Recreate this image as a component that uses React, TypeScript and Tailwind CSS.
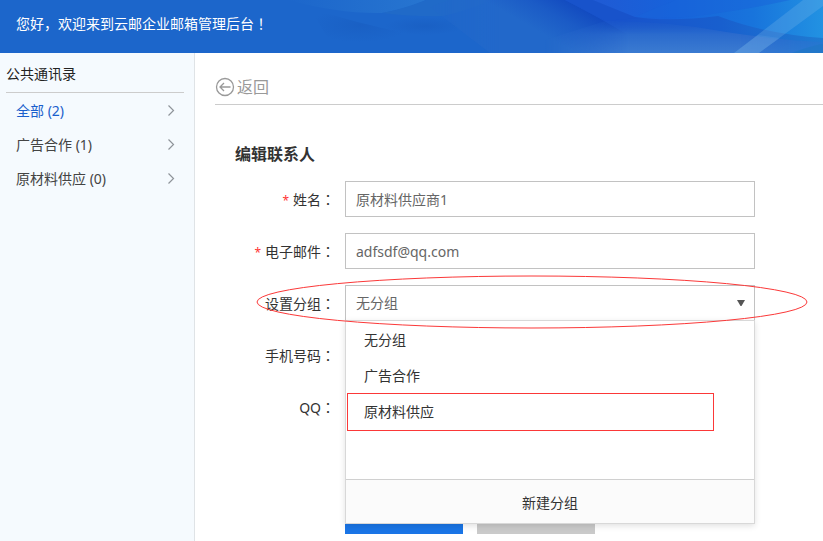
import React, { useState } from 'react';

const groups = [
  { name: '全部', count: 2 },
  { name: '广告合作', count: 1 },
  { name: '原材料供应', count: 0 },
];

const options = ['无分组', '广告合作', '原材料供应'];

const inputClass =
  'block h-9 w-full max-w-[410px] border border-[#c2c2c2] bg-white px-2.5 text-[#666] outline-none';

// Punctuation centred in its full-width cell
const Mark = ({ children }: { children: React.ReactNode }) => (
  <span className="font-['Noto_Sans_CJK_JP',sans-serif]">{children}</span>
);

const HeaderArt = () => (
  <svg
    className="absolute inset-0 h-full w-full"
    viewBox="0 0 823 53"
    preserveAspectRatio="xMaxYMid slice"
    aria-hidden="true"
  >
    <defs>
      <linearGradient id="glow" x1="0" y1="0" x2="1" y2="0">
        <stop offset="0" stopColor="#1c66cb" />
        <stop offset="1" stopColor="#2775d0" />
      </linearGradient>
      <radialGradient id="shade">
        <stop offset="0" stopColor="#185cc0" />
        <stop offset="1" stopColor="#185cc0" stopOpacity="0" />
      </radialGradient>
      <linearGradient id="slope" gradientUnits="userSpaceOnUse" x1="592" y1="10" x2="560" y2="66">
        <stop offset="0" stopColor="#1148bf" />
        <stop offset="0.35" stopColor="#1b5bc6" />
        <stop offset="0.7" stopColor="#2268ca" />
        <stop offset="1" stopColor="#2268ca" />
      </linearGradient>
      <linearGradient id="slopeEdge" gradientUnits="userSpaceOnUse" x1="430" y1="0" x2="500" y2="0">
        <stop offset="0" stopColor="#fff" stopOpacity="0.3" />
        <stop offset="1" stopColor="#fff" />
      </linearGradient>
      <mask id="slopeMask">
        <rect x="420" width="403" height="53" fill="url(#slopeEdge)" />
      </mask>
      <linearGradient id="deep" gradientUnits="userSpaceOnUse" x1="590" y1="0" x2="823" y2="0">
        <stop offset="0" stopColor="#205ad4" />
        <stop offset="0.35" stopColor="#1762da" />
        <stop offset="0.7" stopColor="#1874dc" />
        <stop offset="1" stopColor="#2292e2" />
      </linearGradient>
      <linearGradient id="under" gradientUnits="userSpaceOnUse" x1="620" y1="0" x2="823" y2="0">
        <stop offset="0" stopColor="#1853cb" />
        <stop offset="0.5" stopColor="#185fce" />
        <stop offset="1" stopColor="#1f7bd2" />
      </linearGradient>
      <linearGradient id="mist" gradientUnits="userSpaceOnUse" x1="0" y1="16" x2="0" y2="53">
        <stop offset="0" stopColor="#1a57c9" stopOpacity="0" />
        <stop offset="0.5" stopColor="#2b6bcd" />
        <stop offset="1" stopColor="#3b7bd1" />
      </linearGradient>
      <linearGradient id="mistEdge" gradientUnits="userSpaceOnUse" x1="545" y1="0" x2="823" y2="0">
        <stop offset="0" stopColor="#fff" stopOpacity="0" />
        <stop offset="0.3" stopColor="#fff" />
        <stop offset="0.7" stopColor="#fff" />
        <stop offset="1" stopColor="#fff" stopOpacity="0.3" />
      </linearGradient>
      <mask id="mistMask">
        <rect x="540" width="283" height="53" fill="url(#mistEdge)" />
      </mask>
    </defs>
    <rect width="823" height="53" fill="#1c66cb" />
    <path d="M288 0Q340 14 382 13Q410 8 426 0Z" fill="url(#glow)" />
    <path d="M426 0Q400 10 382 13Q415 17 443 16Q470 10 492 0Z" fill="#206ac8" />
    <path d="M310 8Q355 23 410 34Q380 44 330 42Z" fill="url(#shade)" fillOpacity="0.6" />
    <ellipse cx="425" cy="26" rx="40" ry="9" fill="url(#shade)" fillOpacity="0.6" />
    <path d="M430 7L450 0H823V53H490Z" fill="url(#slope)" mask="url(#slopeMask)" />
    {/* Layered ridges on the right */}
    <path d="M565 0H823V53H655Q620 28 565 0Z" fill="url(#under)" />
    <path d="M565 0H594L640 18L605 21Z" fill="#1853cb" />
    <path d="M593 0Q620 11 635 17Q670 22 718 16Q765 34 823 38V0Z" fill="url(#deep)" />
    <path d="M635 17Q670 20 712 14Q755 8 790 0H676Q655 8 635 17Z" fill="#1764da" fillOpacity="0.5" />
    <path d="M545 53V40L605 21Q665 21 720 31Q775 40 823 42V53Z" fill="url(#mist)" mask="url(#mistMask)" />
    <path d="M734 53L803 0H823V6L759 53Z" fill="#7ab8ea" fillOpacity="0.28" />
    <path d="M734 53L758 35L780 38L759 53Z" fill="#7ab8ea" fillOpacity="0.15" />
    <path d="M792 53Q810 46 823 44V53Z" fill="#1f76c6" fillOpacity="0.7" />
  </svg>
);

const ChevronIcon = () => (
  <svg className="h-3 w-2" viewBox="0 0 8 12" fill="none" stroke="#8f949a" strokeWidth="1.2" aria-hidden="true">
    <path d="M1.5 0.5L6.5 5.5L1.5 10.5" />
  </svg>
);

const BackIcon = () => (
  <svg className="h-5 w-5" viewBox="0 0 20 20" fill="none" stroke="#999" strokeWidth="1.3" aria-hidden="true">
    <circle cx="10" cy="10" r="8.5" />
    <path d="M15.5 10H5.5M9 6L5 10L9 14" />
  </svg>
);

interface FieldProps {
  id: string;
  label: string;
  required?: boolean;
  children: React.ReactNode;
}

const Field = ({ id, label, required, children }: FieldProps) => (
  <div className="relative flex items-center gap-2.5">
    <label htmlFor={id} className="w-[100px] shrink-0 text-right whitespace-nowrap text-[#333]">
      {required && <span className="mr-1 text-xs text-[#f33]">*</span>}
      {label}
      <Mark>：</Mark>
    </label>
    {children}
  </div>
);

const App = () => {
  const [group, setGroup] = useState('无分组');

  return (
    <div className="flex min-h-screen flex-col bg-white font-['Noto_Sans','Noto_Sans_CJK_SC',sans-serif] text-sm">
      <header className="relative flex h-[53px] items-center bg-[#1c66cb] px-4 pb-1.5 text-white">
        <HeaderArt />
        <p className="relative">
          您好，欢迎来到云邮企业邮箱管理后台<Mark>！</Mark>
        </p>
      </header>

      <div className="flex grow">
        <aside className="w-[195px] shrink-0 border-r border-[#dfe3e6] bg-[#f5fafe]">
          <h2 className="mr-2.5 ml-1.5 flex h-10 items-center border-b border-[#ccc] pt-0.5 text-[#222]">
            公共通讯录
          </h2>
          <nav className="pt-px">
            {groups.map((item, i) => (
              <a
                key={item.name}
                href="#"
                className={`flex h-[34px] items-center justify-between pr-[19px] pl-4 ${
                  i === 0 ? 'text-[#1a5fcc]' : 'text-[#444]'
                }`}
              >
                {item.name} ({item.count})
                <ChevronIcon />
              </a>
            ))}
          </nav>
        </aside>

        <main className="min-w-0 grow pt-4 pl-5">
          <div className="flex h-9 items-center border-b border-[#ccc]">
            <a href="#" className="flex items-center gap-0.5 text-base text-[#999]">
              <BackIcon />
              返回
            </a>
          </div>

          <form className="px-5 pt-9" onSubmit={(e) => e.preventDefault()}>
            <h1 className="mb-3.5 h-[26px] text-base leading-[26px] font-bold text-[#333]">编辑联系人</h1>

            <div className="flex flex-col gap-4">
              <Field id="name" label="姓名" required>
                <input id="name" type="text" defaultValue="原材料供应商1" className={inputClass} />
              </Field>
              <Field id="email" label="电子邮件" required>
                <input id="email" type="text" defaultValue="adfsdf@qq.com" className={inputClass} />
              </Field>

              <div className="relative z-10">
                <Field id="group" label="设置分组">
                  <div className="relative w-full max-w-[410px]">
                    <select
                      id="group"
                      value={group}
                      onChange={(e) => setGroup(e.target.value)}
                      className={`${inputClass} appearance-none`}
                    >
                      {options.map((name) => (
                        <option key={name}>{name}</option>
                      ))}
                    </select>
                    <svg
                      className="pointer-events-none absolute top-3.5 right-2.5 h-2 w-2"
                      viewBox="0 0 8 8"
                      fill="#555"
                      aria-hidden="true"
                    >
                      <path d="M0 1H8L4.5 7H3.5Z" />
                    </svg>

                    {/* Opened group list */}
                    <div className="absolute top-full left-0 -mt-px w-full border border-[#d8d8d8] bg-white text-[#333] shadow-[0_2px_6px_rgba(0,0,0,0.12)]">
                      <ul className="h-[158px] pt-px">
                        {options.map((name, i) => (
                          <li key={name} className="relative">
                            <button
                              type="button"
                              onClick={() => setGroup(name)}
                              className="block h-9 w-full px-[18px] text-left"
                            >
                              {name}
                            </button>
                            {i === 2 && (
                              <span className="pointer-events-none absolute -inset-y-px right-10 left-px border border-[#fb3838]" />
                            )}
                          </li>
                        ))}
                      </ul>
                      <button
                        type="button"
                        className="block h-11 w-full border-t border-[#d0d0d0] bg-[#fbfbfb] pt-0.5"
                      >
                        新建分组
                      </button>
                    </div>
                  </div>
                </Field>
                <svg
                  className="pointer-events-none absolute -top-2.5 left-5 h-[54px] w-[554px]"
                  viewBox="0 0 554 54"
                  fill="none"
                  stroke="#fb3838"
                  aria-hidden="true"
                >
                  <ellipse cx="277" cy="27" rx="275" ry="26" />
                </svg>
              </div>

              <Field id="phone" label="手机号码">
                <input id="phone" type="text" className={inputClass} />
              </Field>
              <Field id="qq" label="QQ">
                <input id="qq" type="text" className={inputClass} />
              </Field>
            </div>

            <div className="flex gap-3.5 pt-[73px] pl-[110px]">
              <button type="submit" aria-label="保存" className="h-9 w-[118px] bg-[#1a75e6]" />
              <button type="button" aria-label="取消" className="h-9 w-[118px] bg-[#cacaca]" />
            </div>
          </form>
        </main>
      </div>
    </div>
  );
};

export default App;
